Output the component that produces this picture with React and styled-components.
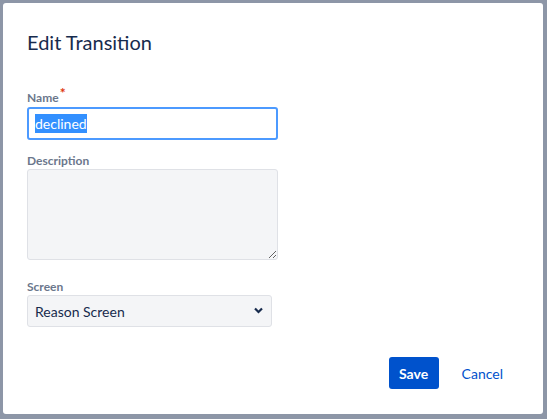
import React from "react";
import styled, { createGlobalStyle } from "styled-components";

const GlobalStyle = createGlobalStyle`
  html, body {
    margin: 0;
    padding: 0;
    background: #8d96a7;
  }
  body {
    font-family: "Segoe UI", Lato, "Noto Sans", "Liberation Sans", sans-serif;
    color: #172b4d;
  }
`;

const Dialog = styled.div`
  box-sizing: border-box;
  width: 540px;
  height: 411px;
  margin: 3px 0 0 3px;
  background: #fff;
  border-radius: 3px;
  padding: 27px 30px 0 24px;
  display: flex;
  flex-direction: column;
`;

const Title = styled.h2`
  margin: 0;
  font-size: 20px;
  line-height: 24px;
  font-weight: 400;
  color: #172b4d;
`;

const Form = styled.form`
  display: flex;
  flex-direction: column;
  margin-top: 36px;
`;

const Field = styled.div`
  display: flex;
  flex-direction: column;
  align-items: flex-start;
  margin-top: ${(p) => p.$gap || 0}px;
`;

const Label = styled.label`
  font-size: 12px;
  line-height: 16px;
  font-weight: 700;
  color: #6b778c;
  margin-bottom: ${(p) => p.$space || 0}px;
`;

const Required = styled.span`
  color: #de350b;
  font-size: 14px;
  line-height: 10px;
  vertical-align: top;
  position: relative;
  top: -2px;
  margin-left: 1px;
`;

const TextBox = styled.div`
  box-sizing: border-box;
  width: 251px;
  height: 33px;
  border: 2px solid #4c9aff;
  border-radius: 3px;
  background: #fff;
  padding: 4px 6px;
  font-size: 14px;
  line-height: 19px;
  display: flex;
  align-items: center;
`;

const Selected = styled.span`
  background: #3390ff;
  color: #fff;
`;

const TextArea = styled.textarea`
  box-sizing: border-box;
  width: 251px;
  height: 91px;
  background: #f4f5f7;
  border: 1px solid #dfe1e6;
  border-radius: 3px;
  font: inherit;
  font-size: 14px;
  resize: vertical;
  outline: none;
`;

const SelectWrap = styled.div`
  position: relative;
  width: 245px;
`;

const Select = styled.select`
  box-sizing: border-box;
  width: 100%;
  height: 32px;
  appearance: none;
  background: #f4f5f7;
  border: 1px solid #dfe1e6;
  border-radius: 3px;
  padding: 0 7px;
  font: inherit;
  font-size: 14px;
  color: #172b4d;
  outline: none;
`;

const Chevron = styled.svg`
  position: absolute;
  right: 9px;
  top: 12px;
  pointer-events: none;
`;

const Footer = styled.div`
  display: flex;
  justify-content: flex-end;
  align-items: center;
  margin-top: 30px;
`;

const SaveButton = styled.button`
  box-sizing: border-box;
  width: 50px;
  height: 32px;
  border: none;
  border-radius: 3px;
  background: #0052cc;
  color: #fff;
  font: inherit;
  font-size: 14px;
  font-weight: 700;
  cursor: pointer;
`;

const CancelLink = styled.a`
  font-size: 14px;
  color: #0052cc;
  text-decoration: none;
  padding: 0 10px;
  margin-left: 13px;
  cursor: pointer;
`;

export default function App() {
  return (
    <>
      <GlobalStyle />
      <Dialog>
        <Title>Edit Transition</Title>
        <Form onSubmit={(e) => e.preventDefault()}>
          <Field>
            <Label $space={1}>
              Name<Required>*</Required>
            </Label>
            <TextBox>
              <Selected>declined</Selected>
            </TextBox>
          </Field>
          <Field $gap={13}>
            <Label>Description</Label>
            <TextArea />
          </Field>
          <Field $gap={19}>
            <Label>Screen</Label>
            <SelectWrap>
              <Select defaultValue="reason">
                <option value="reason">Reason Screen</option>
                <option value="none">No screen</option>
              </Select>
              <Chevron width="9" height="7" viewBox="0 0 9 7">
                <path d="M1 1.5l3.5 3.5L8 1.5" fill="none" stroke="#172b4d" strokeWidth="2.2" />
              </Chevron>
            </SelectWrap>
          </Field>
          <Footer>
            <SaveButton type="submit">Save</SaveButton>
            <CancelLink>Cancel</CancelLink>
          </Footer>
        </Form>
      </Dialog>
    </>
  );
}
